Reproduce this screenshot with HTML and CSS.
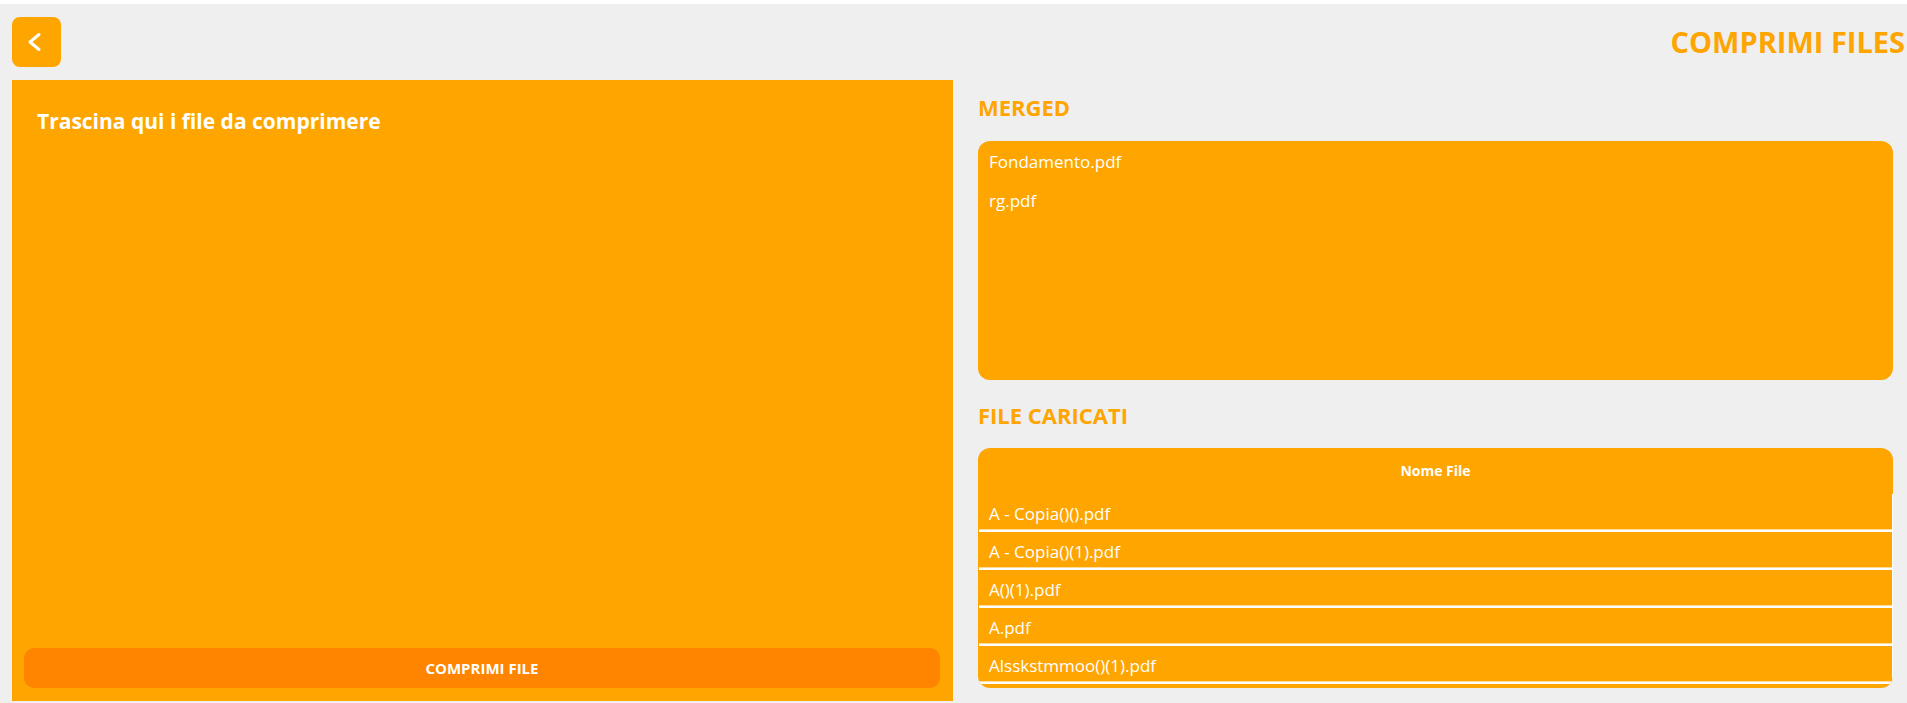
FILE: index.html
```html
<!DOCTYPE html>
<html lang="it">
<head>
    <meta charset="UTF-8">
    <meta name="viewport" content="width=device-width, initial-scale=1.0">
    <title>Comprimi Files</title>
    <link rel="stylesheet" href="styles.css">
</head>
<body>
    <div class="header">
        <button class="btn-back" type="button" aria-label="Indietro">
            <svg width="24" height="24" viewBox="0 0 24 24">
                <path d="M14 4.5 L5 12 L14 19.5" fill="none" stroke="#fff" stroke-width="3" stroke-linecap="round" stroke-linejoin="round"/>
            </svg>
        </button>
        <h1 class="titolo">COMPRIMI FILES</h1>
    </div>

    <div class="main">
        <div class="dropzone">
            <h2 class="dropzone-titolo">Trascina qui i file da comprimere</h2>
            <div class="dropzone-spazio"></div>
            <button class="btn-comprimi" type="button">COMPRIMI FILE</button>
        </div>

        <div class="colonna">
            <h3 class="sezione-titolo">MERGED</h3>
            <ul class="merged-lista">
                <li>Fondamento.pdf</li>
                <li>rg.pdf</li>
            </ul>

            <h3 class="sezione-titolo sezione-secondaria">FILE CARICATI</h3>
            <div class="tabella">
                <div class="tabella-header">Nome File</div>
                <div class="tabella-righe">
                    <div class="riga">A - Copia()().pdf</div>
                    <div class="riga">A - Copia()(1).pdf</div>
                    <div class="riga">A()(1).pdf</div>
                    <div class="riga">A.pdf</div>
                    <div class="riga">Alsskstmmoo()(1).pdf</div>
                </div>
            </div>
        </div>
    </div>
</body>
</html>
```

FILE: styles.css
```css
body {
    font-family: 'Open Sans', 'Noto Sans', sans-serif;
    margin: 0;
    background-color: #efefef;
    border-top: 4px solid #fff;
    color: #fff;
}
.header {
    display: flex;
    justify-content: space-between;
    align-items: center;
    height: 76px;
    padding: 0 2px 0 12px;
}
.btn-back {
    width: 49px;
    height: 50px;
    border: none;
    border-radius: 8px;
    background: #ffa500;
    display: flex;
    align-items: center;
    justify-content: center;
    padding: 0;
    cursor: pointer;
}
.titolo {
    margin: 0;
    font-size: 29px;
    font-weight: 700;
    color: #ffa500;
    line-height: 36px;
}
.main {
    display: grid;
    grid-template-columns: 941fr 915fr;
    column-gap: 25px;
    height: 621px;
    padding: 0 14px 0 12px;
}
.dropzone {
    background: #ffa500;
    display: flex;
    flex-direction: column;
    padding: 0 13px 13px 12px;
}
.dropzone-titolo {
    margin: 27px 0 0 13px;
    font-size: 21px;
    font-weight: 700;
    line-height: 28px;
}
.dropzone-spazio {
    flex: 1;
}
.btn-comprimi {
    height: 40px;
    border: none;
    border-radius: 10px;
    background: #ff8400;
    color: #fff;
    font-family: inherit;
    font-size: 15px;
    font-weight: 700;
    cursor: pointer;
}
.colonna {
    display: flex;
    flex-direction: column;
    padding-top: 13px;
}
.sezione-titolo {
    margin: 0 0 20px;
    font-size: 22px;
    font-weight: 700;
    line-height: 28px;
    color: #ffa500;
}
.sezione-secondaria {
    margin-top: 21px;
    margin-bottom: 19px;
}
.merged-lista {
    list-style: none;
    margin: 0;
    padding: 1px 11px 0;
    height: 238px;
    background: #ffa500;
    border-radius: 12px;
}
.merged-lista li {
    font-size: 17px;
    line-height: 39px;
}
.tabella {
    background: #ffa500;
    border-radius: 12px;
    height: 240px;
    overflow: hidden;
}
.tabella-header {
    height: 46px;
    line-height: 46px;
    text-align: center;
    font-size: 14px;
    font-weight: 700;
}
.tabella-righe {
    margin-left: 1px;
    border-right: 1px solid #fff;
}
.riga {
    height: 34px;
    padding: 2px 0 0 10px;
    line-height: 36px;
    font-size: 17px;
    border-bottom: 2px solid #fff;
    box-shadow: inset 0 -1px 0 #ffdb99;
}
```
